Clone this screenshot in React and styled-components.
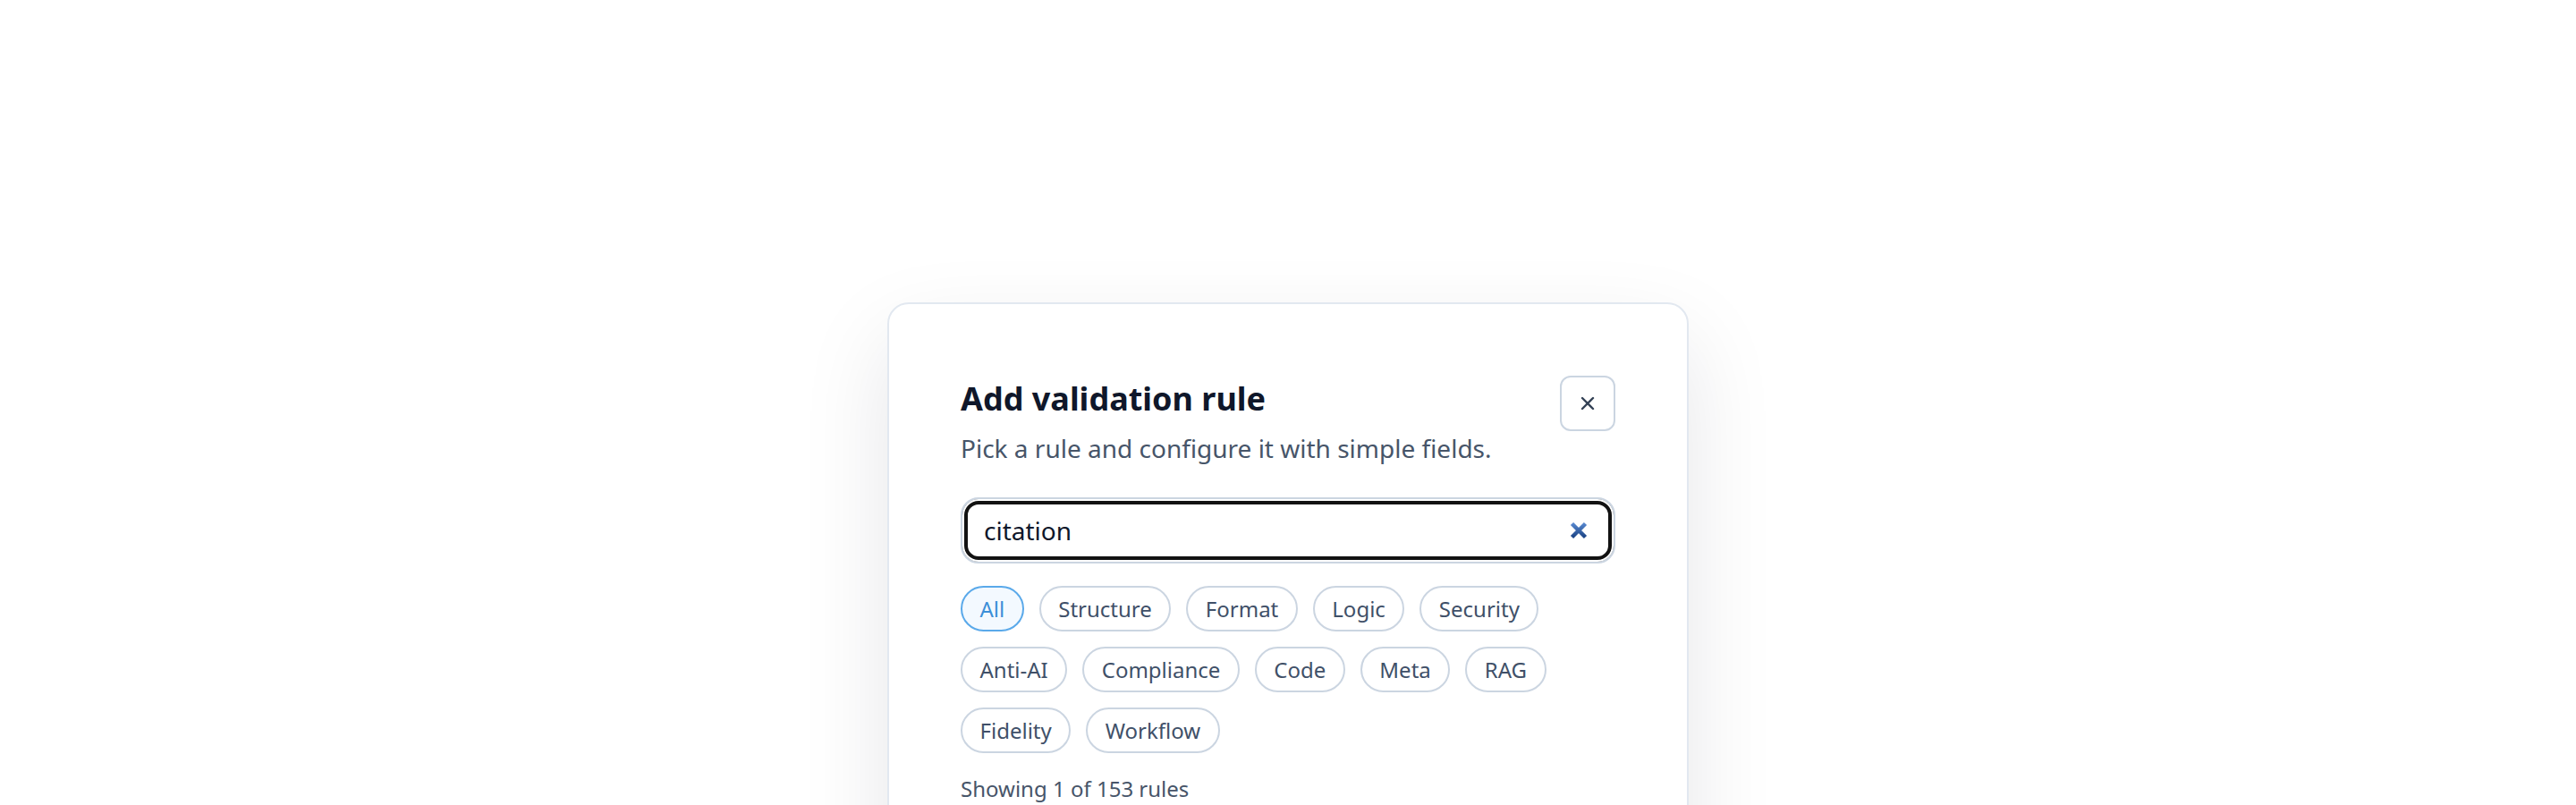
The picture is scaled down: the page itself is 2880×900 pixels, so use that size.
import React from "react";
import styled, { createGlobalStyle } from "styled-components";

const GlobalStyle = createGlobalStyle`
  html, body {
    margin: 0;
    padding: 0;
    height: 100%;
    overflow: hidden;
    background: #ffffff;
  }
  body {
    font-family: "Noto Sans", "Open Sans", sans-serif;
    color: #0f172a;
  }
  *, *::before, *::after { box-sizing: border-box; }
`;

const Page = styled.div`
  display: flex;
  justify-content: center;
  padding-top: 338px;
`;

const Modal = styled.section`
  width: 896px;
  background: #ffffff;
  border: 2px solid #e2e8f0;
  border-radius: 24px;
  padding: 80px 80px 120px;
  box-shadow: 0 40px 100px rgba(15, 23, 42, 0.1);
`;

const Header = styled.header`
  display: flex;
  justify-content: space-between;
  align-items: flex-start;
  margin-bottom: 36px;
`;

const TitleBlock = styled.div`
  display: flex;
  flex-direction: column;
`;

const Title = styled.h2`
  margin: 0;
  font-size: 36px;
  line-height: 52px;
  font-weight: 700;
  color: #0f172a;
`;

const Subtitle = styled.p`
  margin: 10px 0 0;
  font-size: 28px;
  line-height: 38px;
  color: #475569;
`;

const CloseButton = styled.button`
  flex: none;
  width: 62px;
  height: 62px;
  display: flex;
  align-items: center;
  justify-content: center;
  padding: 0;
  background: #ffffff;
  border: 2px solid #cbd5e1;
  border-radius: 12px;
  cursor: pointer;
`;

const SearchField = styled.div`
  position: relative;
`;

const SearchInput = styled.input`
  display: block;
  width: 100%;
  height: 74px;
  padding: 0 70px 0 24px;
  font-family: "Noto Sans", "Open Sans", sans-serif;
  font-size: 28px;
  color: #0f172a;
  background: #ffffff;
  border: 2px solid #cbd5e1;
  border-radius: 20px;
  box-shadow: inset 0 0 0 2px #ffffff, inset 0 0 0 6px #121212;
  outline: none;
`;

const ClearButton = styled.button`
  position: absolute;
  top: 50%;
  right: 31px;
  transform: translateY(-50%);
  width: 20px;
  height: 20px;
  padding: 0;
  border: none;
  background: transparent;
  display: flex;
  cursor: pointer;
`;

const ChipRow = styled.div`
  display: flex;
  flex-wrap: wrap;
  gap: 17px;
  margin-top: 25px;
`;

const Chip = styled.button`
  height: 51px;
  display: inline-flex;
  align-items: center;
  padding: 0 19.5px;
  font-family: "Noto Sans", "Open Sans", sans-serif;
  font-size: 24px;
  line-height: 1;
  border-radius: 999px;
  border: 2px solid ${(p) => (p.$active ? "#5aa9ea" : "#cbd5e1")};
  background: ${(p) => (p.$active ? "#f3f9ff" : "#ffffff")};
  color: ${(p) => (p.$active ? "#3b8fd8" : "#405068")};
  cursor: pointer;
`;

const Count = styled.p`
  margin: 23px 0 0;
  font-size: 24px;
  color: #475569;
`;

const CloseIcon = () => (
  <svg width="16" height="16" viewBox="0 0 16 16" aria-hidden="true">
    <path
      d="M2 2 L14 14 M14 2 L2 14"
      stroke="#334155"
      strokeWidth="2.4"
      strokeLinecap="round"
      fill="none"
    />
  </svg>
);

const ClearIcon = () => (
  <svg width="20" height="20" viewBox="0 0 20 20" aria-hidden="true">
    <defs>
      <linearGradient id="clearGrad" x1="0" y1="0" x2="0" y2="1">
        <stop offset="0" stopColor="#5686cd" />
        <stop offset="1" stopColor="#1c4586" />
      </linearGradient>
    </defs>
    <path
      d="M2.5 2.5 L17.5 17.5 M17.5 2.5 L2.5 17.5"
      stroke="url(#clearGrad)"
      strokeWidth="4.5"
      fill="none"
    />
  </svg>
);

const categories = [
  "All",
  "Structure",
  "Format",
  "Logic",
  "Security",
  "Anti-AI",
  "Compliance",
  "Code",
  "Meta",
  "RAG",
  "Fidelity",
  "Workflow",
];

export default function App() {
  const [query, setQuery] = React.useState("citation");
  const [active, setActive] = React.useState("All");
  return (
    <>
      <GlobalStyle />
      <Page>
        <Modal role="dialog" aria-label="Add validation rule">
          <Header>
            <TitleBlock>
              <Title>Add validation rule</Title>
              <Subtitle>Pick a rule and configure it with simple fields.</Subtitle>
            </TitleBlock>
            <CloseButton aria-label="Close">
              <CloseIcon />
            </CloseButton>
          </Header>
          <SearchField>
            <SearchInput
              value={query}
              onChange={(e) => setQuery(e.target.value)}
              aria-label="Search rules"
            />
            <ClearButton aria-label="Clear search" onClick={() => setQuery("")}>
              <ClearIcon />
            </ClearButton>
          </SearchField>
          <ChipRow>
            {categories.map((c) => (
              <Chip key={c} $active={c === active} onClick={() => setActive(c)}>
                {c}
              </Chip>
            ))}
          </ChipRow>
          <Count>Showing 1 of 153 rules</Count>
        </Modal>
      </Page>
    </>
  );
}
